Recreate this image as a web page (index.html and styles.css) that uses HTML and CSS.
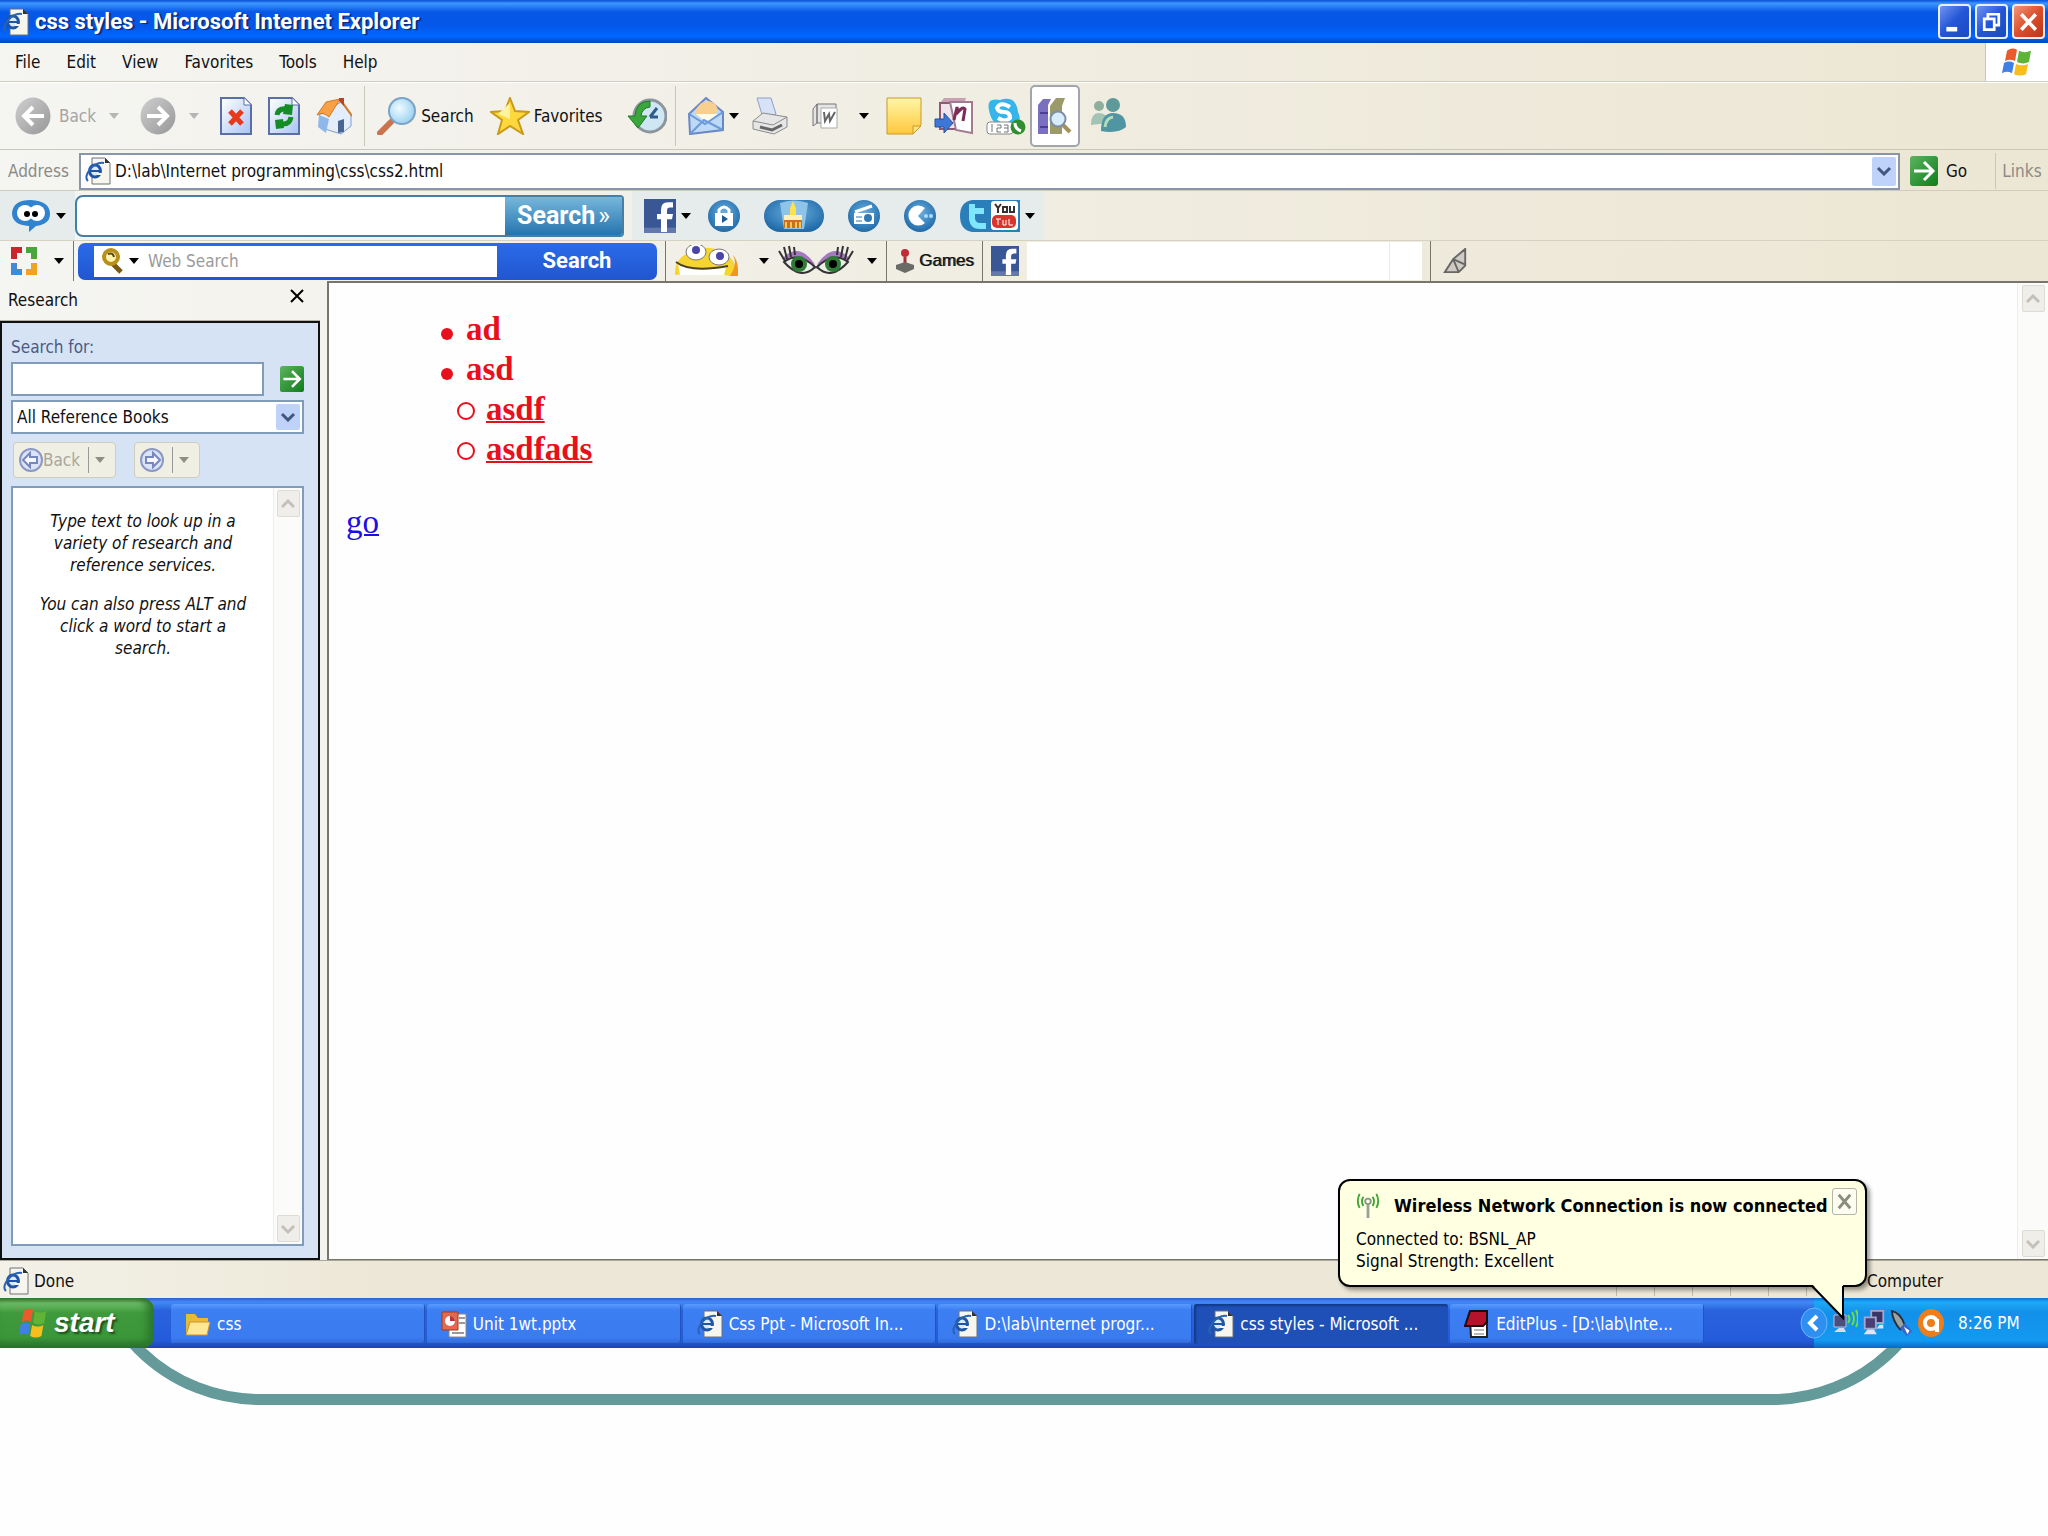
FILE: index.html
```html
<!DOCTYPE html>
<html lang="en">
<head>
<meta charset="utf-8">
<title>css styles - Microsoft Internet Explorer</title>
<link rel="stylesheet" href="styles.css">
</head>
<body>
<svg class="defs" aria-hidden="true">
  <defs>
    <linearGradient id="gGrey" x1="0" y1="0" x2="1" y2="1"><stop offset="0" stop-color="#cfcfcf"/><stop offset="1" stop-color="#979797"/></linearGradient>
    <linearGradient id="gPage" x1="0" y1="0" x2="1" y2="1"><stop offset="0" stop-color="#fff"/><stop offset="1" stop-color="#a9c3f3"/></linearGradient>
    <linearGradient id="gGreen" x1="0" y1="0" x2="1" y2="1"><stop offset="0" stop-color="#5db35f"/><stop offset="1" stop-color="#0f7d1b"/></linearGradient>
    <linearGradient id="gNote" x1="0" y1="0" x2="0" y2="1"><stop offset="0" stop-color="#fff6a8"/><stop offset="1" stop-color="#ffc83c"/></linearGradient>
    <radialGradient id="gBlue" cx=".5" cy=".4" r=".6"><stop offset="0" stop-color="#6cb0e0"/><stop offset="1" stop-color="#1f6aa8"/></radialGradient>
    <radialGradient id="gLens" cx=".4" cy=".4" r=".7"><stop offset="0" stop-color="#f0fbff"/><stop offset="1" stop-color="#8fcdee"/></radialGradient>
    <symbol id="iePage" viewBox="0 0 26 28" preserveAspectRatio="none">
      <path d="M7 1h13l5 5v21H7z" fill="#f7f6ee" stroke="#6d7079"/>
      <path d="M20 1v5h5z" fill="#333"/>
      <ellipse cx="10" cy="14" rx="5.500" ry="6" fill="#dce9f8" stroke="#1f55a5" stroke-width="3"/>
      <path d="M5 14h11" stroke="#1f55a5" stroke-width="2"/>
      <path d="M12 16h6v2h-6z" fill="#f7f6ee"/>
      <path d="M3 24C-3 19 9 4 19 6" fill="none" stroke="#2a63b4" stroke-width="2"/>
    </symbol>
    <symbol id="winFlag" viewBox="0 0 32 32" preserveAspectRatio="none">
      <path d="M6 4q5-4 10-1l-2 12q-5-3-10 0z" fill="#ea5a2a"/>
      <path d="M18 4q5 3 12 0l-2 12q-6 3-12 0z" fill="#5fb336"/>
      <path d="M3 17q5-3 10 0l-2 11q-5-3-10 0z" fill="#3f7fe6"/>
      <path d="M15 18q6 3 12 0l-2 11q-6 3-12 0z" fill="#f8be1c"/>
    </symbol>
    <symbol id="tri" viewBox="0 0 12 8"><path d="M1 1h10l-5 6z"/></symbol>
    <symbol id="fb" viewBox="0 0 32 32" preserveAspectRatio="none">
      <path d="M0 0h32v32H0z" fill="#3a5795"/><path d="M0 27h32v5H0z" fill="#6379ad"/>
      <path d="M17 31V19h-4v-5h4v-4q0-7 7-7h5v5h-3q-3 0-3 3v3h6l-1 5h-5v12z" fill="#fff"/>
    </symbol>
    <symbol id="down" viewBox="0 0 16 10"><path d="M2 2l6 6 6-6" fill="none" stroke="currentColor" stroke-width="3"/></symbol>
    <symbol id="up" viewBox="0 0 16 10"><path d="M2 8l6-6 6 6" fill="none" stroke="currentColor" stroke-width="3"/></symbol>
    <symbol id="goArrow" viewBox="0 0 28 30" preserveAspectRatio="none">
      <rect x="0" y="0" width="28" height="30" rx="3" fill="url(#gGreen)"/>
      <path d="M4 15h18M14 6l9 9-9 9" fill="none" stroke="#fff" stroke-width="3"/>
    </symbol>
  </defs>
</svg>

<div class="window">
  <header class="titlebar">
    <svg class="i26"><use href="#iePage"/></svg>
    <h1>css styles - Microsoft Internet Explorer</h1>
    <div class="winbtns">
      <button aria-label="Minimize"><svg viewBox="0 0 32 34"><path d="M7 23h12v5H7z" fill="#fff"/></svg></button>
      <button aria-label="Restore"><svg viewBox="0 0 32 34"><path d="M12 15V9h12v12h-5M8 14h11v12H8z" fill="none" stroke="#fff" stroke-width="3"/></svg></button>
      <button class="close" aria-label="Close"><svg viewBox="0 0 32 34"><path d="M8 9l16 17M24 9L8 26" stroke="#fff" stroke-width="4"/></svg></button>
    </div>
  </header>

  <nav class="menubar">
    <button>File</button><button>Edit</button><button>View</button><button>Favorites</button><button>Tools</button><button>Help</button>
    <span class="flagbox"><svg class="i32"><use href="#winFlag"/></svg></span>
  </nav>

  <div class="toolbar">
    <button class="tool off"><svg class="i36" viewBox="0 0 36 38"><ellipse cx="18" cy="19" rx="17.500" ry="18.500" fill="url(#gGrey)"/><path d="M29 19H9M18 10l-9 9 9 9" fill="none" stroke="#fff" stroke-width="4"/></svg><span class="ml8">Back</span></button>
    <svg class="tri off ml12"><use href="#tri"/></svg>
    <button class="tool ml20" aria-label="Forward"><svg class="i36" viewBox="0 0 36 38"><ellipse cx="18" cy="19" rx="17.500" ry="18.500" fill="url(#gGrey)"/><path d="M7 19h20M18 10l9 9-9 9" fill="none" stroke="#fff" stroke-width="4"/></svg></button>
    <svg class="tri off ml12"><use href="#tri"/></svg>
    <button class="tool ml20" aria-label="Stop"><svg class="i32" viewBox="0 0 32 38"><path d="M1 1h23l7 7v29H1z" fill="url(#gPage)" stroke="#5a6fa8" stroke-width="2"/><path d="M24 1v7h7" fill="#fff" stroke="#5a6fa8"/><path d="M10 14l12 13M22 14L10 27" stroke="#e8391c" stroke-width="5"/></svg></button>
    <button class="tool ml16" aria-label="Refresh"><svg class="i32" viewBox="0 0 32 38"><path d="M1 1h23l7 7v29H1z" fill="url(#gPage)" stroke="#5a6fa8" stroke-width="2"/><path d="M24 1v7h7" fill="#fff" stroke="#5a6fa8"/><path d="M9 18q1-7 10-6M23 20q-1 8-10 7" fill="none" stroke="#168c26" stroke-width="5"/><path d="M17 7l8 1-1 10-9-1zM15 22l-8 1 1 9 8-1z" fill="#168c26"/></svg></button>
    <button class="tool ml16" aria-label="Home"><svg class="i36" viewBox="0 0 36 38"><path d="M3 18l6 14 16 5 10-8V18L25 5z" fill="#e4eefb" stroke="#7b9fd0"/><path d="M3 18l-1 12 8 6 3-14z" fill="#8fb8ea"/><path d="M1 18L10 5l14-3-11 18q-6-6-12-2z" fill="#f7a046" stroke="#d27a22"/><path d="M24 2l12 17" stroke="#d27a22" stroke-width="2"/><path d="M23 1h5v8l-5-5z" fill="#b9422c"/><path d="M22 24l6-2v13l-6 1z" fill="#4a6494"/></svg></button>
    <i class="sep ml12"></i>
    <button class="tool ml12"><svg class="i40" viewBox="0 0 40 38"><path d="M14 25L3 36" stroke="#c9744c" stroke-width="6" stroke-linecap="round"/><ellipse cx="25" cy="14" rx="13" ry="13" fill="url(#gLens)" stroke="#7ba3c8" stroke-width="2"/></svg><span class="ml4">Search</span></button>
    <button class="tool ml16"><svg class="i40" viewBox="0 0 40 38"><path d="M20 1l5 13 14 1-11 8 5 14-13-8-12 8 4-14L1 15l14-1z" fill="#ffd83d" stroke="#c99a17" stroke-width="2"/><path d="M20 6v16l-12-5z" fill="#fff2a0"/></svg><span class="ml4">Favorites</span></button>
    <button class="tool ml24" aria-label="History"><svg class="i40" viewBox="0 0 40 38"><circle cx="23" cy="19" r="16" fill="#cfe6f5" stroke="#8c959c" stroke-width="3"/><path d="M23 20l7-9M23 20h8" stroke="#2f5c86" stroke-width="3"/><path d="M23 4Q9 4 8 19H1l10 12 9-12h-6q1-8 9-9z" fill="#3aa63c" stroke="#1d7a24"/></svg></button>
    <i class="sep ml8"></i>
    <button class="tool ml12" aria-label="Mail"><svg class="i36" viewBox="0 0 36 38"><path d="M1 17L18 1l17 14v18L2 37z" fill="#bcd9f6" stroke="#6b86c4" stroke-width="2"/><path d="M7 17q2-12 14-13 8 2 9 10l-11 10z" fill="#f8cf8f"/><path d="M8 17h22l-11 9z" fill="#fffbe8"/><path d="M2 37l14-14 19 10M1 17l16 10 18-12" fill="none" stroke="#6b9bd8" stroke-width="2"/></svg></button>
    <svg class="tri ml4"><use href="#tri"/></svg>
    <button class="tool ml12" aria-label="Print"><svg class="i36" viewBox="0 0 36 38"><path d="M5 1h14l5 16-13 4z" fill="#d7e1f8" stroke="#8e9ec9"/><path d="M1 24l10-8 24 4v10L22 37 1 32z" fill="#e6e6e6" stroke="#8b8b8b"/><path d="M1 24l20 4 14-8" fill="none" stroke="#8b8b8b"/><path d="M8 30l12 3 10-5" stroke="#666" stroke-width="3" fill="none"/></svg></button>
    <button class="tool ml24" aria-label="Edit with Word"><svg class="i26" viewBox="0 0 26 28"><path d="M5 2h19v19H5zM1 7l4-5v19l-4 3z" fill="#e4e4e4" stroke="#777"/><path d="M9 6h16v20H9z" fill="#fff" stroke="#aaa"/><path d="M12 10l1 9 4-7 1 7 5-9" fill="none" stroke="#666" stroke-width="2"/></svg></button>
    <svg class="tri ml20"><use href="#tri"/></svg>
    <button class="tool ml16" aria-label="Note"><svg class="i36" viewBox="0 0 36 38"><path d="M1 1h34v27l-8 9H1z" fill="url(#gNote)" stroke="#c79a2c"/><path d="M27 37v-8h8z" fill="#ffe27a" stroke="#c79a2c"/></svg></button>
    <button class="tool ml12" aria-label="OneNote"><svg class="i40" viewBox="0 0 40 38"><path d="M6 6l4-5h22l-2 6z" fill="#c9a0b4"/><path d="M6 6h26v26H6z" fill="#f1e3ea" stroke="#8b5a75" stroke-width="2"/><path d="M16 5h22v31l-16-3z" fill="#fff" stroke="#a37b90" stroke-width="2"/><path d="M20 23l3-13 1 5q5-6 7-3l-2 12" fill="none" stroke="#7a2d56" stroke-width="3"/><path d="M1 22h9v-6l9 10-9 10v-6H1z" fill="#3e78d6" stroke="#27509d"/></svg></button>
    <button class="tool ml12" aria-label="Skype"><svg class="i40" viewBox="0 0 40 38"><path d="M3 13Q0 0 14 3q16-5 18 12 6 12-8 14-18 3-21-16z" fill="#35b5ea"/><path d="M24 10q-10-6-13 1 1 4 7 4t6 6q-5 5-12 0" fill="none" stroke="#fff" stroke-width="4"/><rect x="1" y="25" width="26" height="12" rx="3" fill="#fff" stroke="#888"/><path d="M6 27v8M11 28h4v3h-4v4h4M18 28h4v7h-4M18 31h4" fill="none" stroke="#777"/><circle cx="32" cy="30" r="7.500" fill="#2f8f2f"/><path d="M29 26q0 6 6 8" stroke="#fff" stroke-width="3" fill="none"/></svg></button>
    <button class="tool pressed ml4" aria-label="Research"><svg class="i36" viewBox="0 0 36 38"><path d="M1 8l5-6h8l-3 6v29H1z" fill="#7b6fc0"/><path d="M13 9l6-8h9l-3 8v28H13z" fill="#9c9a6a"/><path d="M3 16h8M3 30h8" stroke="#4b3f93" stroke-width="2"/><path d="M26 28l7 7" stroke="#a8905c" stroke-width="4"/><circle cx="21" cy="22" r="7.500" fill="#d8edfb" stroke="#7b8fa8" stroke-width="2"/></svg></button>
    <button class="tool ml8" aria-label="Messenger"><svg class="i40" viewBox="0 0 40 38"><circle cx="11" cy="9" r="5" fill="#8fae9c"/><path d="M3 28q0-12 8-12 9 0 9 10z" fill="#a3c4b4"/><circle cx="25" cy="8" r="7" fill="#5f9a9a"/><path d="M13 34q0-18 12-18 13 0 13 14-8 7-25 4z" fill="#4f95a3"/><path d="M17 30q1-9 8-10" stroke="#b7dcb9" stroke-width="3" fill="none"/></svg></button>
  </div>

  <div class="addressbar">
    <label for="addr">Address</label>
    <div class="combo">
      <svg class="i26"><use href="#iePage"/></svg>
      <input id="addr" type="text" value="D:\lab\Internet programming\css\css2.html">
      <button class="drop" aria-label="Show addresses"><svg class="chev"><use href="#down"/></svg></button>
    </div>
    <button class="tool go"><svg class="i28"><use href="#goArrow"/></svg><span class="ml8">Go</span></button>
    <span class="links">Links</span>
  </div>

  <div class="band">
    <div class="tint">
      <button class="tool" aria-label="Assistant"><svg class="i40" viewBox="0 0 40 34"><path d="M20 1q19 1 19 14 0 10-14 12l-7 6v-6Q1 26 1 14 2 1 20 1z" fill="#2f83cf"/><ellipse cx="14" cy="14" rx="8" ry="8" fill="#fff"/><ellipse cx="26" cy="14" rx="8" ry="8" fill="#fff"/><circle cx="16" cy="15" r="3"/><circle cx="24" cy="15" r="3"/></svg></button>
      <svg class="tri ml4"><use href="#tri"/></svg>
    </div>
    <form class="find"><input type="text" aria-label="Search"><button type="button">Search<small>»</small></button></form>
    <div class="tint wide">
      <button class="tool" aria-label="Facebook"><svg class="i32"><use href="#fb"/></svg></button>
      <svg class="tri ml4"><use href="#tri"/></svg>
      <button class="tool ml16" aria-label="Privacy"><svg class="i32" viewBox="0 0 32 32"><circle cx="16" cy="16" r="16" fill="url(#gBlue)"/><path d="M11 14v-4q5-6 10 0v4" fill="none" stroke="#fff" stroke-width="3"/><path d="M7 13h18v13H7z" fill="#fff"/><path d="M14 15l6 4-6 4z" fill="#1f5c94"/></svg></button>
      <button class="tool ml24" aria-label="Birthdays"><svg class="w60" viewBox="0 0 60 32"><rect width="60" height="32" rx="16" fill="url(#gBlue)"/><path d="M16 3q14-5 28 0l-4 26H20z" fill="#8fc4ea"/><path d="M26 8l3-7 3 7v8h-6z" fill="#ffe24a"/><path d="M20 15h18v5H20z" fill="#fff0b8"/><path d="M20 20h18v8H20z" fill="#c9701e"/><path d="M22 22v6M27 22v6M32 22v6M36 22v6" stroke="#fbc65a" stroke-width="2"/></svg></button>
      <button class="tool ml24" aria-label="Radio"><svg class="i32" viewBox="0 0 32 32"><circle cx="16" cy="16" r="16" fill="url(#gBlue)"/><path d="M6 13h20v11H6z" fill="#fff"/><path d="M7 12l17-6" stroke="#fff" stroke-width="3"/><circle cx="20" cy="18" r="4" fill="#2f7ab5"/><path d="M8 17h6M8 21h6" stroke="#2f7ab5"/></svg></button>
      <button class="tool ml24" aria-label="Arcade"><svg class="i32" viewBox="0 0 32 32"><circle cx="16" cy="16" r="16" fill="url(#gBlue)"/><path d="M21 8l-7 8 7 7A10 10 0 1 1 21 8z" fill="#fff"/><circle cx="22" cy="16" r="2" fill="#a9dcff"/><circle cx="27" cy="16" r="2" fill="#a9dcff"/></svg></button>
      <button class="tool ml24" aria-label="Twitter and YouTube"><svg class="w60" viewBox="0 0 60 32"><path d="M12 0h48v32H12Q0 30 0 16T12 0z" fill="#2a7fba"/><path d="M12 4v15q1 7 8 7h6M12 11h12" fill="none" stroke="#7fe6fb" stroke-width="6"/><rect x="31" y="1" width="27" height="29" rx="3" fill="#fff"/><rect x="32" y="15" width="24" height="13" rx="5" fill="#d8362c"/><path d="M35 4l3 4 3-4M38 8v5M43 7h4v5h-4zM50 6v6h4V6" fill="none" stroke="#333" stroke-width="2"/><path d="M36 19h5M38 19v6M43 20v5h3v-5M49 19v6h4" fill="none" stroke="#fff" stroke-width="1"/></svg></button>
      <svg class="tri ml4"><use href="#tri"/></svg>
    </div>
  </div>

  <div class="band low">
    <button class="tool" aria-label="Toolbar menu"><svg class="i26" viewBox="0 0 26 28"><path d="M0 0h11v6H6v6H0z" fill="#c9252b"/><path d="M15 0h11v12h-6V6h-5z" fill="#4aa53c"/><path d="M0 16h6v6h5v6H0z" fill="#3e8bd9"/><path d="M20 16h6v12H15v-6h5z" fill="#f0a321"/></svg></button>
    <svg class="tri ml16"><use href="#tri"/></svg>
    <i class="sep dark ml8"></i>
    <form class="web">
      <div class="field"><svg class="i24" viewBox="0 0 24 26"><path d="M13 16l8 8" stroke="#7a5a12" stroke-width="5"/><circle cx="11" cy="9" r="7" fill="#fff3b0" stroke="#b8901a" stroke-width="4"/><path d="M8 6q5-2 6 3" stroke="#5a4a10" stroke-width="2" fill="none"/></svg><svg class="tri ml4"><use href="#tri"/></svg><input type="text" placeholder="Web Search" aria-label="Web Search"></div>
      <button type="button">Search</button>
    </form>
    <i class="sep dark ml8"></i>
    <button class="tool ml8" aria-label="Smileys"><svg class="w64" viewBox="0 0 64 32"><path d="M1 30Q0 14 14 8q18-10 34-1 16 8 14 23l-6 1q-24-5-55-1z" fill="#f7d531"/><path d="M56 31q8-12 3-21 6 6 5 21z" fill="#ef9520"/><path d="M4 18q14 10 48 4l-2 8H6z" fill="#fff"/><path d="M2 17q14 11 52 4" fill="none" stroke="#4a4320" stroke-width="2"/><ellipse cx="22" cy="7" rx="10" ry="8" fill="#fff" stroke="#777"/><ellipse cx="45" cy="12" rx="10" ry="8" fill="#fff" stroke="#777"/><circle cx="22" cy="5" r="4" fill="#4b45a8"/><circle cx="46" cy="11" r="4" fill="#4b45a8"/></svg></button>
    <svg class="tri ml20"><use href="#tri"/></svg>
    <button class="tool ml8" aria-label="Eyes"><svg class="w76" viewBox="0 0 76 32"><g id="eye"><path d="M4 14Q20-4 36 18L38 24z" fill="#a678c0"/><path d="M6 17q14-11 31 5-14 14-31-5z" fill="#e9f0e6" stroke="#333" stroke-width="2"/><circle cx="21" cy="19" r="8" fill="#2f7a35"/><circle cx="21" cy="19" r="4"/><path d="M7 16L1 6M9 14L6 2M13 12L11 1M17 10L16 2" stroke="#333" stroke-width="2"/></g><use href="#eye" transform="matrix(-1 0 0 1 76 0)"/></svg></button>
    <svg class="tri ml12"><use href="#tri"/></svg>
    <i class="sep dark ml8"></i>
    <button class="tool games ml8"><svg class="i20" viewBox="0 0 20 24"><circle cx="10" cy="4" r="4" fill="#c32a35"/><path d="M10 8v8" stroke="#a8303a" stroke-width="3"/><path d="M1 16l9-3 9 3v4l-9 4-9-4z" fill="#6a6a66"/></svg><span class="ml4">Games</span></button>
    <i class="sep dark ml8"></i>
    <button class="tool ml8" aria-label="Facebook"><svg class="i28"><use href="#fb"/></svg></button>
    <span class="blank"></span><span class="blank short"></span>
    <i class="sep dark ml8"></i>
    <button class="tool ml12" aria-label="Clear"><svg class="i24" viewBox="0 0 24 28"><path d="M1 26h15l7-7V1L10 12z" fill="#cfcbc4" stroke="#666" stroke-width="2"/><path d="M10 12l6 14M10 12l13 6" stroke="#666" stroke-width="2" fill="none"/></svg></button>
  </div>

  <div class="work">
    <aside class="research">
      <div class="rhead"><h2>Research</h2><button aria-label="Close pane"><svg viewBox="0 0 14 14"><path d="M1 1l12 12M13 1L1 13" stroke="#000" stroke-width="2"/></svg></button></div>
      <div class="rbody">
        <label for="rq">Search for:</label>
        <div class="rrow"><input id="rq" type="text"><button class="tool" aria-label="Start searching"><svg class="i24"><use href="#goArrow"/></svg></button></div>
        <div class="rsel"><select aria-label="Reference source"><option>All Reference Books</option></select><span class="drop"><svg class="chev"><use href="#down"/></svg></span></div>
        <div class="rnav">
          <button><svg class="i24" viewBox="0 0 24 24"><circle cx="12" cy="12" r="11" fill="#dbe3f6" stroke="#8b98c4" stroke-width="2"/><path d="M4 12l7-7v4h7v6h-7v4z" fill="#f4f7ff" stroke="#7887bd" stroke-width="2"/></svg>Back<i></i><svg class="tri"><use href="#tri"/></svg></button>
          <button aria-label="Forward"><svg class="i24" viewBox="0 0 24 24"><circle cx="12" cy="12" r="11" fill="#dbe3f6" stroke="#8b98c4" stroke-width="2"/><path d="M20 12l-7-7v4H6v6h7v4z" fill="#f4f7ff" stroke="#7887bd" stroke-width="2"/></svg><i></i><svg class="tri"><use href="#tri"/></svg></button>
        </div>
        <div class="rlist">
          <div class="rtext">
            <p>Type text to look up in a variety of research and reference services.</p>
            <p>You can also press ALT and click a word to start a search.</p>
          </div>
          <div class="scroll"><span><svg class="chev"><use href="#up"/></svg></span><span><svg class="chev"><use href="#down"/></svg></span></div>
        </div>
      </div>
    </aside>
    <main class="page">
      <div class="doc">
        <ul>
          <li>ad</li>
          <li>asd
            <ul><li>asdf</li><li>asdfads</li></ul>
          </li>
        </ul>
        <a href="#">go</a>
      </div>
      <div class="scroll"><span><svg class="chev"><use href="#up"/></svg></span><span><svg class="chev"><use href="#down"/></svg></span></div>
    </main>
  </div>

  <div class="status">
    <svg class="i26"><use href="#iePage"/></svg><span>Done</span>
    <div class="cells"><i></i><i></i><i></i><i></i><i></i><i></i></div>
    <span class="zone">Computer</span>
  </div>
</div>

<footer class="taskbar">
  <button class="start"><svg class="i30"><use href="#winFlag"/></svg>start</button>
  <div class="tasks">
    <button><svg class="i26" viewBox="0 0 26 26"><path d="M1 3h9l3 4h10v17H1z" fill="#e9b93a"/><path d="M1 24l4-13h20l-3 13z" fill="#ffe793" stroke="#c9952a"/></svg><span>css</span></button>
    <button><svg class="i26" viewBox="0 0 26 28"><path d="M8 4h17v23H8z" fill="#fff" stroke="#888"/><path d="M1 2h16v18H1z" fill="#e06a50" stroke="#a33a22"/><circle cx="9" cy="11" r="5" fill="#fff"/><path d="M9 6v5h5A5 5 0 0 0 9 6z" fill="#b33"/><path d="M18 8h6M18 13h6M11 23h12" stroke="#999" stroke-width="2"/></svg><span>Unit 1wt.pptx</span></button>
    <button><svg class="i26"><use href="#iePage"/></svg><span>Css Ppt - Microsoft In...</span></button>
    <button><svg class="i26"><use href="#iePage"/></svg><span>D:\lab\Internet progr...</span></button>
    <button class="on"><svg class="i26"><use href="#iePage"/></svg><span>css styles - Microsoft ...</span></button>
    <button><svg class="i26" viewBox="0 0 26 28"><path d="M6 10h17v17H7z" fill="#fff" stroke="#222" stroke-width="2"/><path d="M6 1h17v11l-4 4H1z" fill="#b5122b" stroke="#111" stroke-width="2"/><path d="M10 20h10M10 24h10" stroke="#777"/></svg><span>EditPlus - [D:\lab\Inte...</span></button>
  </div>
  <div class="tray">
    <button class="expand" aria-label="Show hidden icons"><svg viewBox="0 0 28 32"><ellipse cx="14" cy="16" rx="13" ry="15" fill="#2f8ff0" stroke="#66b8fa"/><path d="M17 9l-7 7 7 7" fill="none" stroke="#fff" stroke-width="4"/></svg></button>
    <svg class="i26" viewBox="0 0 26 28"><path d="M2 6h12v12H2z" fill="#4a4f7c" stroke="#b8bcd8"/><path d="M2 23l5-4h5l2 4z" fill="#d8dced"/><path d="M16 6q3 4 0 8M20 3q4 7 0 13M24 1q4 9 0 17" fill="none" stroke="#6fe03c" stroke-width="2"/></svg>
    <svg class="i24" viewBox="0 0 24 28"><path d="M9 1h13v13H9z" fill="#3a3566" stroke="#a4a6cc" stroke-width="2"/><path d="M2 8h12v12H2z" fill="#4a3f74" stroke="#a4a6cc" stroke-width="2"/><path d="M1 26l4-5h7l3 5zM15 20l3-4h4v4z" fill="#e0e4f4"/></svg>
    <svg class="i24" viewBox="0 0 24 28"><path d="M1 1q9 2 14 15l-5 5Q2 12 1 1z" fill="#9aa3a0" stroke="#2a2a33" stroke-width="2"/><path d="M15 14l8 9-6 5-7-8z" fill="#3766c8"/><path d="M14 18l6 4-2 4z" fill="#fff"/></svg>
    <svg class="i26" viewBox="0 0 26 28"><ellipse cx="13" cy="14" rx="13" ry="14" fill="#ee7d1b"/><circle cx="13" cy="14" r="6" fill="none" stroke="#fff" stroke-width="4"/><path d="M19 10v13" stroke="#fff" stroke-width="4"/></svg>
    <time>8:26 PM</time>
  </div>
  <section class="balloon">
    <h3><svg class="i24" viewBox="0 0 24 28"><path d="M12 12v15" stroke="#9aa09a" stroke-width="3"/><circle cx="12" cy="9" r="3" fill="none" stroke="#8c948c" stroke-width="2"/><path d="M7 4q-3 5 0 10M17 4q3 5 0 10M3 1q-4 8 0 15M21 1q4 8 0 15" fill="none" stroke="#3da535" stroke-width="2"/></svg>Wireless Network Connection is now connected</h3>
    <button aria-label="Dismiss"><svg viewBox="0 0 24 24"><path d="M6 5l12 14M18 5L6 19" stroke="#8d8d7d" stroke-width="3"/></svg></button>
    <p>Connected to: BSNL_AP<br>Signal Strength: Excellent</p>
    <svg class="tail" viewBox="0 0 36 36"><path d="M1 0l31 34V0z" fill="#ffffe1"/><path d="M1 2l31 32V2" fill="none" stroke="#000" stroke-width="2"/></svg>
  </section>
</footer>
<div class="slide"><div class="frame"></div></div>
</body>
</html>
```
FILE: styles.css
```css
* { box-sizing: border-box; }
body {
  margin: 0; min-height: 100vh; display: flex; flex-direction: column;
  background: #fefefe; color: #111;
  font: 17px/22px "DejaVu Sans Condensed", "DejaVu Sans", sans-serif;
}
button, input, select { font: inherit; color: inherit; margin: 0; padding: 0; border: 0; background: none; border-radius: 0; }
h1, h2, h3, p { margin: 0; font: inherit; }
svg { display: block; flex: none; }
.defs { position: absolute; width: 0; height: 0; }
.window { flex: 1; display: flex; flex-direction: column; background: linear-gradient(90deg, #f5f5f2, #efebde 60%, #ece7d4); }

.i20 { width: 20px; height: 24px; }
.i24 { width: 24px; height: 26px; }
.i26 { width: 26px; height: 28px; }
.i28 { width: 28px; height: 30px; }
.i30 { width: 30px; height: 32px; }
.i32 { width: 32px; height: 38px; }
.i36 { width: 36px; height: 38px; }
.i40 { width: 40px; height: 38px; }
.w60 { width: 60px; height: 34px; }
.w64 { width: 64px; height: 32px; }
.w76 { width: 76px; height: 32px; }
.ml4 { margin-left: 4px; }
.ml8 { margin-left: 8px; }
.ml12 { margin-left: 12px; }
.ml16 { margin-left: 16px; }
.ml20 { margin-left: 20px; }
.ml24 { margin-left: 24px; }
.tri { width: 12px; height: 8px; fill: #000; }
.off { color: #a5a5a5; }
.tri.off { fill: #b5b5b5; }
.chev { width: 16px; height: 10px; }
.tool { display: flex; align-items: center; flex: none; }
.sep { width: 1px; align-self: stretch; background: #c9c7ba; flex: none; }
.sep.dark { background: #77756c; }

.titlebar {
  height: 43px; display: flex; align-items: center; padding: 0 3px;
  background: linear-gradient(#0a4fd8, #3d95ff 8%, #0657e6 28%, #0458e8 60%, #0066ff 85%, #0344c4);
  color: #fff;
}
.titlebar h1 { margin-left: 6px; font: bold 22px/26px Roboto, sans-serif; text-shadow: 2px 1px 1px #0a2a80; }
.winbtns { margin-left: auto; display: flex; gap: 4px; }
.winbtns button { width: 33px; height: 35px; border: 2px solid #e8eefc; border-radius: 4px; background: linear-gradient(135deg, #6f93f0, #2355d6 50%, #1b49c0); }
.winbtns .close { background: linear-gradient(135deg, #f0967c, #dc4f2c 50%, #b9371a); }
.winbtns svg { width: 29px; height: 31px; }

.menubar { height: 39px; display: flex; align-items: stretch; gap: 26px; padding-left: 15px; border-bottom: 1px solid #d0cdc0; }
.flagbox { width: 63px; margin-left: auto; background: #fff; border-left: 1px solid #c9c7ba; display: flex; align-items: center; justify-content: center; }
.flagbox svg { height: 30px; }

.toolbar { height: 68px; display: flex; align-items: center; padding: 3px 15px; border-top: 1px solid #fff; border-bottom: 1px solid #c9c7ba; }
.pressed { width: 50px; height: 62px; justify-content: center; background: #fff; border: 2px solid #a3a5ad; border-radius: 5px; }

.addressbar { height: 41px; display: flex; align-items: center; padding: 3px 0 1px 8px; border-bottom: 1px solid #cfccbe; }
.addressbar label { width: 71px; color: #8b8b86; }
.combo { flex: 1; height: 37px; display: flex; align-items: center; padding: 2px 2px 2px 4px; border: 2px solid #8a96a8; background: #fff; }
.combo input { flex: 1; margin-left: 4px; min-width: 0; }
.drop { width: 24px; align-self: stretch; display: flex; align-items: center; justify-content: center; background: #bfd2f9; border-radius: 2px; color: #41577e; }
.go { margin-left: 10px; width: 86px; align-self: stretch; border-right: 1px solid #c9c7ba; }
.links { width: 52px; text-align: center; color: #8b8b86; }

.band { height: 50px; display: flex; align-items: center; border-bottom: 1px solid #d5d2c4; }
.tint { align-self: stretch; display: flex; align-items: center; padding: 0 8px 0 11px; background: #e6ebeb; }
.tint.wide { padding-left: 12px; margin-left: 8px; }
.tint .i32 { height: 34px; }
.find { display: flex; width: 549px; height: 42px; border: 2px solid #467fa5; border-radius: 8px 4px 4px 8px; background: #fff; overflow: hidden; }
.find input { flex: 1; min-width: 0; }
.find button { width: 117px; background: linear-gradient(#77b7dc, #2674ae); color: #fff; font: bold 25px/36px Roboto, sans-serif; }
.find small { margin-left: 3px; font-size: 25px; font-weight: 400; }
.band.low { height: 40px; padding-left: 11px; border: 0; }
.web { margin-left: 4px; display: flex; width: 579px; height: 37px; padding: 3px 0 3px 16px; border-radius: 7px; background: linear-gradient(#2a6be8, #2156cf); }
.web .field { flex: 1; display: flex; align-items: center; padding-left: 6px; background: #fff; min-width: 0; }
.web input { flex: 1; min-width: 0; margin-left: 8px; }
.web input::placeholder { color: #9b9b9b; opacity: 1; }
.web button { width: 160px; color: #fff; font: bold 22px/28px Roboto, sans-serif; }
.games { font: 17px/22px "Liberation Sans", sans-serif; text-shadow: 1px 0 #555; }
.blank { width: 362px; height: 38px; margin-left: 8px; background: #fff; }
.blank.short { width: 32px; margin-left: 1px; }

.work { flex: 1; display: flex; }
.research { width: 327px; flex: none; display: flex; flex-direction: column; padding-right: 7px; }
.rhead { height: 40px; display: flex; justify-content: space-between; padding: 8px 16px 0 8px; border-bottom: 1px solid #b5b2a4; }
.rhead button { align-self: flex-start; }
.rhead svg { width: 14px; height: 14px; }
.rbody { flex: 1; display: flex; flex-direction: column; border: 2px solid #111; background: #d6e3f5; padding: 13px 14px 12px 9px; }
.rbody label { color: #4b5a86; }
.rrow { margin-top: 4px; display: flex; justify-content: space-between; align-items: center; }
.rrow input { width: 253px; height: 34px; border: 2px solid #7f9db9; background: #fff; }
.rsel { position: relative; margin-top: 4px; }
.rsel select { width: 100%; height: 34px; padding-left: 4px; appearance: none; border: 2px solid #7f9db9; background: #fff; }
.rsel .drop { position: absolute; right: 4px; top: 4px; bottom: 4px; pointer-events: none; }
.rnav { display: flex; gap: 18px; margin: 8px 2px; }
.rnav button { display: flex; align-items: center; height: 36px; padding: 0 9px 0 5px; border: 1px solid #cfcdc0; border-radius: 4px; background: #f0efe4; color: #a8a79c; }
.rnav i { width: 1px; height: 26px; margin: 0 5px 0 8px; background: #999; }
.rnav .tri { fill: #8f8e84; }
.rlist { flex: 1; display: flex; border: 2px solid #7f9db9; background: #fff; }
.rtext { flex: 1; padding: 22px 18px; text-align: center; font-style: italic; }
.rtext p + p { margin-top: 17px; }
.scroll { width: 29px; flex: none; display: flex; flex-direction: column; justify-content: space-between; align-items: center; padding: 2px 0; background: #fbfbf9; border-left: 1px solid #eeede6; }
.scroll span { width: 23px; height: 27px; display: flex; align-items: center; justify-content: center; background: #f0eeea; border: 1px solid #dddbd2; border-radius: 2px; color: #c3c1b9; }
.page { flex: 1; display: flex; min-width: 0; background: #fefefe; border: solid #77756c; border-width: 2px 0 1px 2px; }
.doc { flex: 1; padding: 26px 17px; font: 33px/40px "Liberation Serif", serif; }
.doc ul { margin: 0; padding: 0; list-style: none; color: #e8101c; font-weight: bold; }
.doc li::before { content: ""; display: inline-block; width: 12px; height: 12px; margin-right: 13px; border-radius: 50%; background: #e8101c; }
.doc > ul { padding-left: 95px; margin-bottom: 33px; }
.doc ul ul { padding-left: 16px; text-decoration: underline; text-decoration-thickness: 2px; }
.doc ul ul li::before { width: 14px; height: 14px; border: 2px solid #e8101c; background: none; margin-right: 11px; }
.doc a { color: #1a10e0; text-decoration-thickness: 2px; }
.page .scroll { width: 31px; }

.status { height: 38px; display: flex; align-items: center; padding: 2px 0 0 3px; background: linear-gradient(90deg, #f3f1e8, #ece7d6 20%, #ece7d6); border-top: 1px solid #aaa799; }
.status span { margin-left: 5px; }
.status .cells { margin-left: auto; display: flex; gap: 37px; height: 30px; margin-right: 60px; }
.cells i { width: 1px; background: #bdbaa9; }
.status .zone { width: 181px; margin-left: 0; }

.taskbar { position: relative; height: 50px; display: flex; align-items: stretch; background: linear-gradient(#2a5fd0, #3f8cf3 8%, #2a62dd 25%, #245bdb 85%, #1a45b0); color: #fff; }
.start { width: 154px; margin-right: 17px; padding-left: 18px; display: flex; align-items: center; gap: 6px; border-radius: 0 12px 12px 0; background: linear-gradient(#2f7d2f, #6fbf6a 10%, #3f9a3c 30%, #3a9638 80%, #2a6f2a); box-shadow: inset -6px 0 8px #2b742b; color: #fff; font: italic bold 28px/32px "Liberation Sans", sans-serif; text-shadow: 2px 2px 2px #1d4f1d; }
.tasks { flex: 1; display: flex; gap: 2px; padding: 6px 110px 4px 0; min-width: 0; }
.tasks button { flex: 1; min-width: 0; display: flex; align-items: center; gap: 6px; padding-left: 14px; border-radius: 3px; background: linear-gradient(#5a9bff, #3c7ff3 15%, #3a7bf0 85%, #2f68d8); box-shadow: inset -1px -1px #2554b8; white-space: nowrap; }
.tasks .on { background: #1e50b8; box-shadow: inset 2px 2px 2px #123a8c; }
.tray { width: 234px; display: flex; align-items: center; gap: 4px; background: linear-gradient(#0f6fd0, #1fa9f5 8%, #1290ea 30%, #139af0 85%, #0c66c8); }
.tray .expand { margin-left: -14px; }
.expand svg { width: 28px; height: 32px; }
.tray time { margin-left: 10px; }

.balloon { position: absolute; right: 181px; bottom: 61px; width: 529px; height: 108px; padding: 12px 16px; color: #000; background: #ffffe1; border: 2px solid #000; border-radius: 12px; box-shadow: 3px 3px 4px #0006; }
.balloon h3 { display: flex; align-items: center; gap: 14px; font-weight: bold; font-size: 18px; white-space: nowrap; }
.balloon p { margin-top: 9px; }
.balloon button { position: absolute; right: 8px; top: 7px; width: 25px; height: 27px; border: 1px solid #b5b5a5; border-radius: 3px; background: #fdfdf2; }
.tail { position: absolute; right: 18px; top: 103px; width: 36px; height: 36px; }

.slide { height: 188px; padding: 0 99px 0 83px; }
.frame { height: 57px; overflow: hidden; display: flex; align-items: flex-end; }
.frame::after { content: ""; flex: 1; height: 400px; border: 11px solid #659a9a; border-radius: 177px; }
```
